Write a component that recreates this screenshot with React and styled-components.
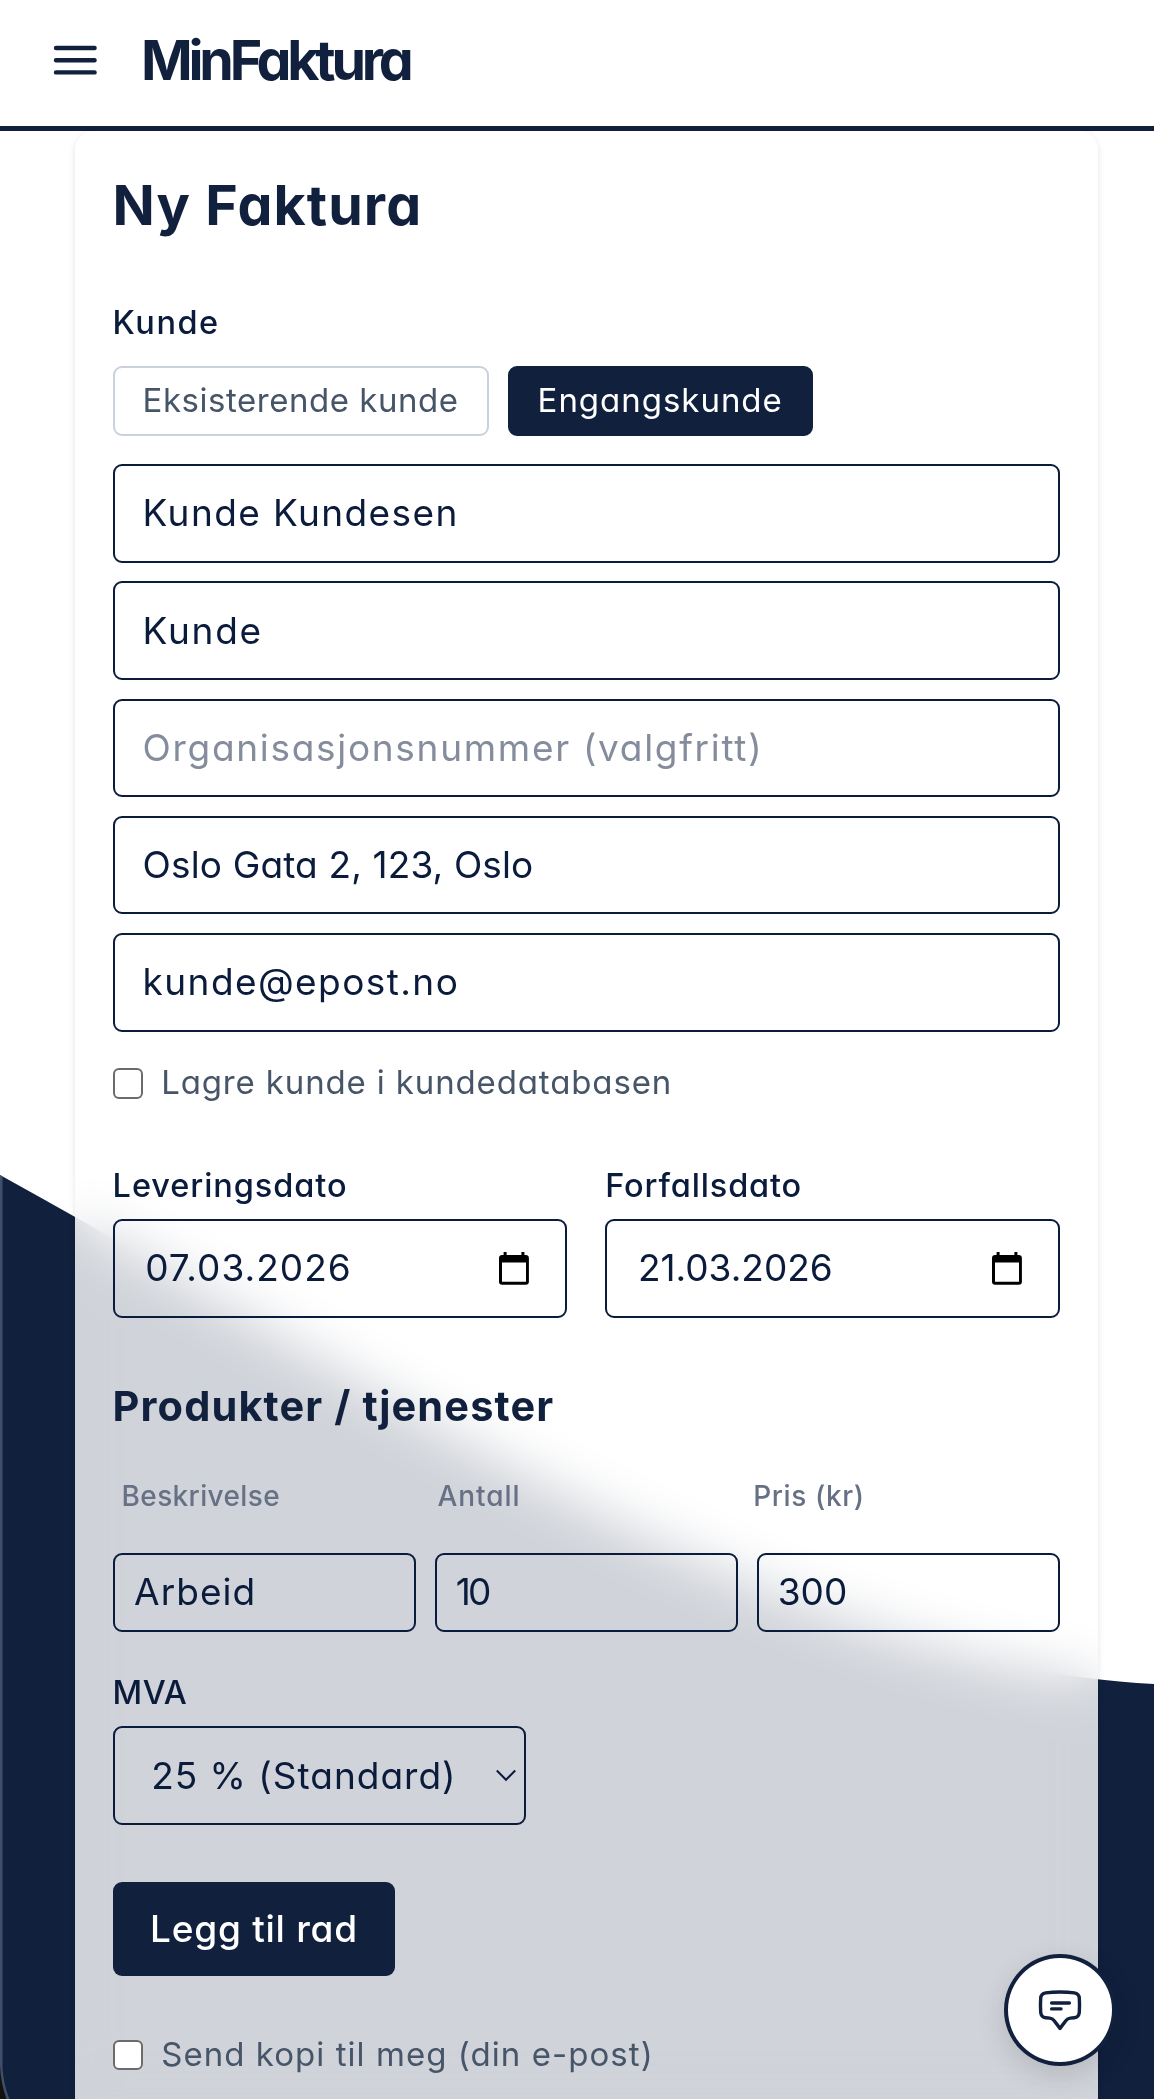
import React from "react";
import styled, { createGlobalStyle } from "styled-components";

const navy = "#10203d";
const ink = "#0b1b3b";

const GlobalStyle = createGlobalStyle`
  * {
    box-sizing: border-box;
  }
  body {
    margin: 0;
    background: #fff;
    color: ${ink};
    font-family: Inter, "Open Sans", sans-serif;
    font-weight: 400;
    font-feature-settings: "cv11";
  }
`;

const Page = styled.div`
  position: relative;
  height: 2099px;
  overflow: hidden;
`;

const Wave = styled.svg`
  position: absolute;
  top: 0;
  left: 0;
`;

const Header = styled.header`
  position: relative;
  display: flex;
  align-items: center;
  gap: 44px;
  height: 131px;
  padding: 0 0 7px 53px;
  background: #fff;
  border-bottom: 5px solid ${navy};
`;

const Logo = styled.div`
  color: ${navy};
  font-size: 55.5px;
  font-weight: 700;
  line-height: 68px;
  letter-spacing: -4.2px;
`;

const Card = styled.main`
  width: 1023px;
  margin-left: 75px;
  padding: 40px 38px 120px 37.6px;
  border-radius: 19px;
  background: rgba(255, 255, 255, 0.803);
  backdrop-filter: blur(28px);
  box-shadow: 0 2px 7px rgba(0, 0, 0, 0.11);
`;

const Title = styled.h1`
  margin: 0 0 61px;
  color: ${navy};
  font-size: 55.5px;
  font-weight: 700;
  line-height: 68px;
  letter-spacing: 1.1px;
`;

const SectionTitle = styled.h2`
  margin: 60.8px 0 41.5px;
  color: ${navy};
  font-size: 41.5px;
  font-weight: 700;
  line-height: 56px;
  letter-spacing: 1.12px;
`;

const Label = styled.div`
  font-size: 32.5px;
  font-weight: 500;
  line-height: 46px;
  letter-spacing: ${(p) => p.$spacing || 0.92}px;
`;

const Toggles = styled.div`
  display: flex;
  gap: 19px;
  margin: 20px 0 28px;
`;

const Toggle = styled.button`
  width: ${(p) => p.$width}px;
  height: 70px;
  padding: 0 0 2px 28px;
  border: 2px solid ${(p) => (p.$active ? navy : "#cbd1dc")};
  border-radius: 9px;
  background: ${(p) => (p.$active ? navy : "transparent")};
  color: ${(p) => (p.$active ? "#fff" : "#475569")};
  font: inherit;
  font-feature-settings: inherit;
  font-size: 33px;
  letter-spacing: ${(p) => p.$spacing}px;
  text-align: left;
  white-space: nowrap;
`;

const Fields = styled.div`
  display: flex;
  flex-direction: column;
  gap: 18.8px;
`;

const Field = styled.div`
  display: flex;
  align-items: center;
  justify-content: space-between;
  height: ${(p) => p.$height || 98.5}px;
  padding: 0 ${(p) => p.$right || 28}px 0 ${(p) => p.$left || 28}px;
  border: 2px solid ${ink};
  border-radius: 9px;
  color: ${(p) => (p.$placeholder ? "#858d9d" : ink)};
  font-size: 37px;
  line-height: 46px;
  letter-spacing: ${(p) => p.$spacing}px;
  white-space: pre;
`;

const CheckRow = styled.label`
  display: flex;
  align-items: center;
  gap: 18.6px;
  height: 46px;
  margin-top: ${(p) => p.$top}px;
  color: #475569;
  font-size: 33px;
  line-height: 40px;
  letter-spacing: ${(p) => p.$spacing}px;
`;

const CheckText = styled.span`
  padding-bottom: 2px;
`;

const Checkbox = styled.span`
  width: 30px;
  height: 30.5px;
  border: 2px solid #6b6b6b;
  border-radius: 6px;
  background: #fff;
`;

const Dates = styled.div`
  display: grid;
  grid-template-columns: 1fr 1fr;
  gap: 38px;
  margin-top: 57px;
`;

const DateField = styled(Field)`
  margin-top: 9.8px;
`;

const ColumnLabels = styled.div`
  display: grid;
  grid-template-columns: repeat(3, 1fr);
`;

const ColumnLabel = styled.div`
  padding-left: 9px;
  color: #677186;
  font-size: 28px;
  font-weight: 500;
  line-height: 40px;
  letter-spacing: ${(p) => p.$spacing}px;
`;

const Row = styled.div`
  display: grid;
  grid-template-columns: repeat(3, 1fr);
  gap: 18.8px;
  margin: 36.7px 0 37.7px;
`;

const Select = styled(Field)`
  width: 413.6px;
  margin-top: 10.3px;
`;

const AddButton = styled.button`
  display: block;
  width: 282.6px;
  height: 94px;
  margin-top: 56.5px;
  padding: 0 0 0 37.5px;
  border: 0;
  border-radius: 9px;
  background: ${navy};
  color: #fff;
  font: inherit;
  font-feature-settings: inherit;
  font-size: 37px;
  font-weight: 500;
  letter-spacing: 0.74px;
  text-align: left;
`;

const ChatButton = styled.div`
  position: absolute;
  left: 1004px;
  top: 1953.5px;
  display: flex;
  align-items: center;
  justify-content: center;
  width: 112px;
  height: 112.5px;
  border: 4.5px solid ${navy};
  border-radius: 50%;
  background: #fff;
  box-shadow: 0 9px 28px rgba(0, 0, 0, 0.13);
`;

const MenuIcon = () => (
  <svg width="44" height="32" fill="none" stroke={navy} strokeWidth="4.4" strokeLinecap="round">
    <path d="M3 4h38.6M3 16.2h38.6M3 28.4h38.6" />
  </svg>
);

const CalendarIcon = () => (
  <svg width="30" height="33" viewBox="0 0 30 33">
    <path
      fill="#000"
      fillRule="evenodd"
      d="M4.6 0h3v3h14.8v-3h3v3h1.3a3.2 3.2 0 0 1 3.2 3.2v23.4a3.2 3.2 0 0 1-3.2 3.2h-23.5a3.2 3.2 0 0 1-3.2-3.2v-23.4a3.2 3.2 0 0 1 3.2-3.2h1.4zM3 10.6v19.2h24v-19.2z"
    />
  </svg>
);

const ChevronIcon = () => (
  <svg width="20" height="13" fill="none" stroke={ink} strokeWidth="2">
    <path d="M.8 1.5l9.2 9.3 9.2-9.3" />
  </svg>
);

const ChatIcon = () => (
  <svg
    width="48"
    height="48"
    fill="none"
    stroke={navy}
    strokeWidth="3.4"
    strokeLinecap="round"
    strokeLinejoin="round"
  >
    <path d="M24 6q8 0 14.3.9q4.7.7 5 5.4q.5 7 0 14q-.4 4.9-5 5.4l-4 .4q-2.8.3-4.3 2.4l-6 7.9l-6-7.9q-1.5-2.1-4.3-2.4l-4-.4q-4.6-.5-5-5.4q-.5-7 0-14q.3-4.7 5-5.4q6.3-.9 14.300-.9z" />
    <path d="M15.6 17h17.8M15.6 22.9h9.4" />
  </svg>
);

const customerFields = [
  { text: "Kunde Kundesen", spacing: 1.4 },
  { text: "Kunde", spacing: 1.75 },
  { text: "Organisasjonsnummer (valgfritt)", spacing: 1.69, placeholder: true },
  { text: "Oslo Gata 2, 123, Oslo", spacing: 0.14 },
  { text: "kunde@epost.no", spacing: 1.42 },
];

const App = () => {
  return (
    <Page>
      <GlobalStyle />
      <Wave width="1154" height="2099">
        <path fill={navy} d="M0 1175C385 1386 770 1665 1154 1684V2099H0z" />
        <path fill="#404e68" d="M0 1175l2.5 1.4V2068q1 17 7 31H0z" />
        <path fill="#14120f" d="M0 2066q1 18 6.5 33H0z" />
      </Wave>
      <Header>
        <MenuIcon />
        <Logo>MinFaktura</Logo>
      </Header>
      <Card>
        <Title>Ny Faktura</Title>
        <Label $spacing={1.5}>Kunde</Label>
        <Toggles>
          <Toggle $width={376} $spacing={0.53}>
            Eksisterende kunde
          </Toggle>
          <Toggle $width={305} $spacing={0.97} $active>
            Engangskunde
          </Toggle>
        </Toggles>
        <Fields>
          {customerFields.map((field) => (
            <Field
              key={field.text}
              $spacing={field.spacing}
              $placeholder={field.placeholder}
            >
              {field.text}
            </Field>
          ))}
        </Fields>
        <CheckRow $top={28.7} $spacing={0.86}>
          <Checkbox />
          <CheckText>Lagre kunde i kundedatabasen</CheckText>
        </CheckRow>
        <Dates>
          <div>
            <Label>Leveringsdato</Label>
            <DateField $spacing={1.05} $left={30.6} $right={36.4}>
              07.03.2026
              <CalendarIcon />
            </DateField>
          </div>
          <div>
            <Label $spacing={0.84}>Forfallsdato</Label>
            <DateField $spacing={0.01} $left={30.6} $right={36.4}>
              21.03.2026
              <CalendarIcon />
            </DateField>
          </div>
        </Dates>
        <SectionTitle>Produkter / tjenester</SectionTitle>
        <ColumnLabels>
          <ColumnLabel $spacing={0.36}>Beskrivelse</ColumnLabel>
          <ColumnLabel $spacing={0.95}>Antall</ColumnLabel>
          <ColumnLabel $spacing={0.6}>Pris (kr)</ColumnLabel>
        </ColumnLabels>
        <Row>
          <Field $height={79.6} $left={19.5} $spacing={1.05}>
            Arbeid
          </Field>
          <Field $height={79.6} $left={19} $spacing={-2.7}>
            10
          </Field>
          <Field $height={79.6} $left={19} $spacing={0.01}>
            300
          </Field>
        </Row>
        <Label $spacing={0.4}>MVA</Label>
        <Select $height={99} $spacing={0.99} $left={36.6} $right={8}>
          25 % (Standard)
          <ChevronIcon />
        </Select>
        <AddButton>Legg til rad</AddButton>
        <CheckRow $top={56.5} $spacing={1.05}>
          <Checkbox />
          <CheckText>Send kopi til meg (din e-post)</CheckText>
        </CheckRow>
      </Card>
      <ChatButton>
        <ChatIcon />
      </ChatButton>
    </Page>
  );
};

export default App;
